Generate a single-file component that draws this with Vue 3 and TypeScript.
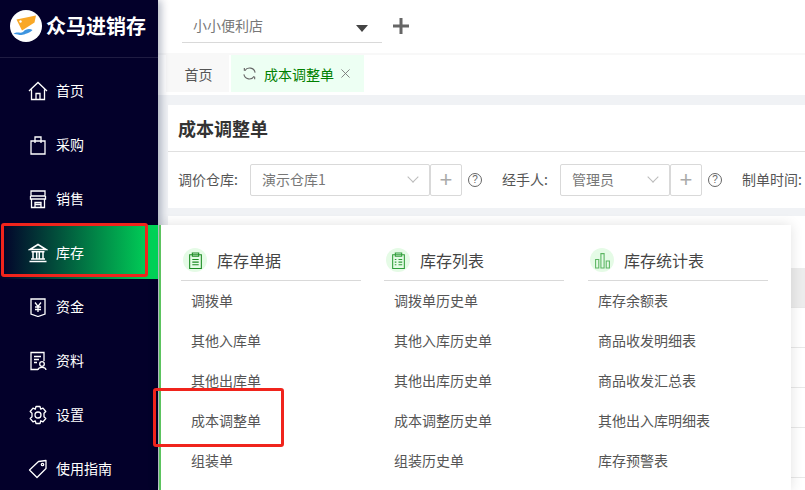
<script setup lang="ts">
interface NavItem { label: string; icon: string; active?: boolean }
const nav: NavItem[] = [
  { label: '首页', icon: 'home' },
  { label: '采购', icon: 'bag' },
  { label: '销售', icon: 'shop' },
  { label: '库存', icon: 'bank', active: true },
  { label: '资金', icon: 'yen' },
  { label: '资料', icon: 'doc' },
  { label: '设置', icon: 'gear' },
  { label: '使用指南', icon: 'tag' },
]
const columns = [
  { title: '库存单据', icon: 'clip', items: ['调拨单', '其他入库单', '其他出库单', '成本调整单', '组装单'] },
  { title: '库存列表', icon: 'list', items: ['调拨单历史单', '其他入库历史单', '其他出库历史单', '成本调整历史单', '组装历史单'] },
  { title: '库存统计表', icon: 'bars', items: ['库存余额表', '商品收发明细表', '商品收发汇总表', '其他出入库明细表', '库存预警表'] },
]
</script>

<template>
  <div class="app">
    <aside class="sidebar">
      <div class="brand">
        <svg class="logo" viewBox="0 0 32 32" width="32" height="32">
          <circle cx="16" cy="16" r="16" fill="#fff" />
          <path d="M6.500 9.500 L26 5.500 L24.500 12.500 L12 20.500 Z" fill="#f9a826" />
          <circle cx="10.500" cy="11.500" r="1.200" fill="#fff" />
          <path d="M3.500 24 C7 21 10 24 13 22 C16 18.500 20 18.500 22.500 20 C20 23 16 23.500 14 24.500 C10 26 7 23.500 3.500 24 Z" fill="#3d95e0" />
        </svg>
        <span class="brand-name">众马进销存</span>
      </div>
      <nav class="nav">
        <div v-for="item in nav" :key="item.label" class="nav-item" :class="{ active: item.active }">
          <svg class="nav-icon" viewBox="0 0 20 20" width="20" height="20" fill="none" stroke="#fff" stroke-width="1.300">
            <template v-if="item.icon === 'home'">
              <path d="M1 10 L10 1.500 L19 10 M3.500 8.500 V18.500 H16.500 V8.500 M8 18.500 V12.500 H12 V18.500" />
            </template>
            <template v-else-if="item.icon === 'bag'">
              <path d="M3 6 H17 V19 H3 Z M7 8 V2 H13 V8" />
            </template>
            <template v-else-if="item.icon === 'shop'">
              <path d="M3 2 H17 V7 H3 Z M2.500 7 V10 H17.500 V7 M3.500 10 V18.500 H16.500 V10 M7 18.500 V13.500 H13 V18.500 M7 15.500 H13" />
            </template>
            <template v-else-if="item.icon === 'bank'">
              <path d="M2 6.500 L10 1.500 L18 6.500 Z M3.500 8.700 H16.500 M5 9 V15.500 M8.700 9 V15.500 M11.300 9 V15.500 M15 9 V15.500 M3 16 H17 M1.500 18.500 H18.500" stroke-width="1.500" />
            </template>
            <template v-else-if="item.icon === 'yen'">
              <path d="M3 2 H17 V17 L10 19.500 L3 17 Z M7 5.500 L10 9.500 L13 5.500 M10 9.500 V15 M7 10 H13 M7 12.500 H13" />
            </template>
            <template v-else-if="item.icon === 'doc'">
              <path d="M10 18.500 H3 V1.500 H16 V10 M6 5.500 H13 M6 8.500 H11 M6 11.500 H9" />
              <circle cx="14" cy="13" r="2.300" />
              <path d="M10 19 C10.500 15.500 17.500 15.500 18 19" />
            </template>
            <template v-else-if="item.icon === 'gear'">
              <path d="M8 1.500 H12 L12.700 4.200 L15 3.100 L17.800 6.500 L16 8.300 L16 11.700 L17.800 13.500 L15 16.900 L12.700 15.800 L12 18.500 H8 L7.300 15.800 L5 16.900 L2.200 13.500 L4 11.700 L4 8.300 L2.200 6.500 L5 3.100 L7.300 4.200 Z" stroke-linejoin="round" />
              <circle cx="10" cy="10" r="3" />
            </template>
            <template v-else>
              <path d="M1.500 11 L10.500 2.500 L18 1.500 L18 9.500 L9 18.500 Z" stroke-linejoin="round" />
              <circle cx="14.500" cy="5.500" r="1.200" />
            </template>
          </svg>
          <span>{{ item.label }}</span>
        </div>
      </nav>
    </aside>

    <main class="main">
      <header class="topbar">
        <div class="store">
          <span>小小便利店</span>
          <i class="caret"></i>
        </div>
        <svg class="store-add" viewBox="0 0 16 16" width="16" height="16">
          <path d="M8 0 V16 M0 8 H16" stroke="#666" stroke-width="3" />
        </svg>
      </header>
      <div class="tabs">
        <div class="tab">首页</div>
        <div class="tab current">
          <svg viewBox="0 0 16 16" width="15" height="15" fill="none" stroke="#666" stroke-width="1.200">
            <path d="M2 9 A6 6 0 0 0 13 11 M14 7 A6 6 0 0 0 3 5 M13.500 11.500 V14 M2.500 5 V2" />
          </svg>
          <span class="tab-text">成本调整单</span>
          <svg viewBox="0 0 10 10" width="9" height="9" stroke="#777" stroke-width="1" fill="none">
            <path d="M.5 .5 L9.500 9.500 M9.500 .5 L.5 9.500" />
          </svg>
        </div>
      </div>
      <div class="content">
        <section class="card">
          <h1 class="title">成本调整单</h1>
          <div class="form">
            <label class="label">调价仓库:</label>
            <div class="select w179"><span>演示仓库1</span><i class="chev"></i></div>
            <button class="plus">+</button>
            <span class="help">?</span>
            <label class="label l2">经手人:</label>
            <div class="select w109"><span>管理员</span><i class="chev"></i></div>
            <button class="plus">+</button>
            <span class="help">?</span>
            <label class="label l3">制单时间:</label>
          </div>
        </section>
        <section class="card lower">
          <div class="thead"></div>
          <div class="trow"></div>
          <div class="trow"></div>
          <div class="trow"></div>
          <div class="trow last"></div>
        </section>
      </div>
    </main>

    <div class="flyout">
      <div v-for="col in columns" :key="col.title" class="col">
        <div class="col-head">
          <span class="col-icon">
            <svg viewBox="0 0 16 16" width="17" height="17" fill="none" stroke="#2f9e3a" stroke-width="1">
              <template v-if="col.icon === 'clip'">
                <path d="M2.500 2.500 H13.500 V15.500 H2.500 Z M5 1 H11 V4 H5 Z M5 7 H11 M5 9.500 H11 M5 12 H11" stroke="#1a8a22" />
              </template>
              <template v-else-if="col.icon === 'list'">
                <path d="M2.500 2.500 H13.500 V15.500 H2.500 Z M5 1 H11 V4 H5 Z M4.500 7 H6 M4.500 9.500 H6 M4.500 12 H6 M8 7 H11.500 M8 9.500 H11.500 M8 12 H11.500" />
              </template>
              <template v-else>
                <path d="M1.500 7 H4.500 V15 H1.500 Z M6.500 1.500 H9.500 V15 H6.500 Z M11.500 8.500 H14.500 V15 H11.500 Z" stroke="#5cb562" />
              </template>
            </svg>
          </span>
          <span>{{ col.title }}</span>
        </div>
        <div v-for="it in col.items" :key="it" class="col-item">{{ it }}</div>
      </div>
    </div>

    <div class="mark mark-nav"></div>
    <div class="mark mark-item"></div>
  </div>
</template>

<style>
html, body { margin: 0; padding: 0; overflow: hidden; }
</style>

<style scoped>
.app {
  position: relative;
  display: flex;
  width: 805px;
  height: 490px;
  overflow: hidden;
  font-family: "Noto Sans CJK SC", "Noto Sans", sans-serif;
  font-size: 14px;
  color: #555;
  background: #f0f2f5;
}
.sidebar {
  flex: 0 0 158px;
  background: #03002a;
  color: #fff;
  box-shadow: 3px 0 8px rgba(3, 20, 60, .3);
  z-index: 2;
}
.brand {
  display: flex;
  align-items: center;
  gap: 4px;
  height: 58px;
  padding: 0 0 6px 10px;
  box-sizing: border-box;
  border-bottom: 1px solid #1f1c42;
}
.logo { flex: none; }
.brand-name { font-size: 20px; font-weight: 700; white-space: nowrap; }
.nav { padding-top: 5px; }
.nav-item {
  display: flex;
  align-items: center;
  gap: 8px;
  height: 54px;
  padding-left: 28px;
  font-size: 14px;
}
.nav-item.active { background: linear-gradient(90deg, #03002a 0%, #00dc5a 100%); }
.nav-icon { flex: none; margin-top: 2px; }
.main { flex: 1; display: flex; flex-direction: column; min-width: 0; }
.topbar {
  display: flex;
  align-items: center;
  height: 55px;
  padding: 0 0 2px 24px;
  box-sizing: border-box;
  background: #fff;
  border-bottom: 2px solid #f8f8f8;
}
.store {
  position: relative;
  width: 200px;
  height: 30px;
  margin-top: 4px;
  padding-left: 11px;
  box-sizing: border-box;
  border-bottom: 1px solid #d9d9d9;
  color: #777;
  font-size: 14px;
  line-height: 24px;
}
.caret {
  position: absolute;
  right: 14px;
  top: 12px;
  border: 6px solid transparent;
  border-top: 7px solid #444;
  border-bottom: 0;
}
.store-add { margin-left: 11px; }
.tabs {
  display: flex;
  height: 40px;
  gap: 2px;
  padding-left: 8px;
  background: #fff;
  box-sizing: border-box;
  padding-bottom: 3px;
}
.tab {
  display: flex;
  align-items: center;
  justify-content: center;
  width: 63px;
  padding-left: 2px;
  box-sizing: border-box;
  background: #f8f8f8;
  font-size: 14px;
  color: #555;
}
.tab.current {
  width: 133px;
  gap: 7px;
  padding: 0 3px 0 0;
  background: #edfff3;
}
.tab-text { color: #008000; font-size: 14px; white-space: nowrap; }
.content { flex: 1; padding: 10px 0 0 10px; }
.card { background: #fff; }
.title {
  margin: 0;
  height: 47px;
  padding-left: 10px;
  box-sizing: border-box;
  border-bottom: 1px solid #e0e0e0;
  font-size: 18px;
  font-weight: 700;
  color: #333;
  line-height: 46px;
}
.form {
  display: flex;
  align-items: center;
  height: 56px;
  padding: 0 0 0 10px;
  white-space: nowrap;
  overflow: hidden;
}
.label { font-size: 14px; color: #555; width: 72px; flex: none; margin-top: -2px; }
.l2 { width: 58px; margin-left: 20px; }
.l3 { width: auto; margin-left: 20px; }
.select {
  position: relative;
  flex: none;
  height: 32px;
  box-sizing: border-box;
  border: 1px solid #d9d9d9;
  border-radius: 2px;
  padding-left: 11px;
  font-size: 14px;
  line-height: 28px;
  color: #777;
}
.w179 { width: 180px; }
.w109 { width: 110px; }
.chev {
  position: absolute;
  right: 12px;
  top: 8px;
  width: 7px;
  height: 7px;
  border-right: 1px solid #bbb;
  border-bottom: 1px solid #bbb;
  transform: rotate(45deg);
}
.plus {
  flex: none;
  width: 32px;
  height: 32px;
  padding: 0;
  box-sizing: border-box;
  border: 1px solid #d9d9d9;
  border-radius: 2px;
  background: #fff;
  color: #aaa;
  font: 400 22px/28px "Liberation Sans", sans-serif;
}
.help {
  flex: none;
  width: 14px;
  height: 14px;
  margin-left: 6px;
  box-sizing: border-box;
  border: 1px solid #666;
  border-radius: 50%;
  color: #666;
  font: 10px/12px "Liberation Sans", sans-serif;
  text-align: center;
}
.lower { margin-top: 8px; height: 274px; padding-top: 52px; box-sizing: border-box; }
.thead { height: 40px; box-sizing: border-box; background: #ececec; border-bottom: 1px solid #e8e8e8; }
.trow { height: 40px; box-sizing: border-box; border-bottom: 1px solid #e8e8e8; }
.trow.last { height: 50px; }
.flyout {
  position: absolute;
  left: 159px;
  top: 225px;
  width: 632px;
  height: 265px;
  box-sizing: border-box;
  display: flex;
  gap: 23px;
  padding: 0 0 0 20px;
  background: #fff;
  border-left: 2px solid #5cc35f;
  box-shadow: 0 0 12px rgba(0, 0, 0, .12);
  z-index: 3;
}
.col { width: 180px; flex: none; }
.col:last-child { margin-left: 1px; }
.col-head {
  display: flex;
  align-items: center;
  gap: 10px;
  height: 56px;
  box-sizing: border-box;
  padding: 15px 0 0 2px;
  border-bottom: 1px solid #d9d9d9;
  font-size: 16px;
  color: #444;
}
.col-icon {
  display: flex;
  align-items: center;
  justify-content: center;
  width: 24px;
  height: 24px;
  border-radius: 50%;
  background: #e5fbe6;
}
.col-item {
  height: 40px;
  padding-left: 10px;
  font-size: 14px;
  line-height: 39px;
  color: #555;
}
.mark {
  position: absolute;
  box-sizing: border-box;
  border: 3px solid #f0241c;
  border-radius: 3px;
  z-index: 4;
}
.mark-nav { left: 1px; top: 223px; width: 147px; height: 54px; }
.mark-item { left: 153px; top: 388px; width: 131px; height: 59px; }
</style>
